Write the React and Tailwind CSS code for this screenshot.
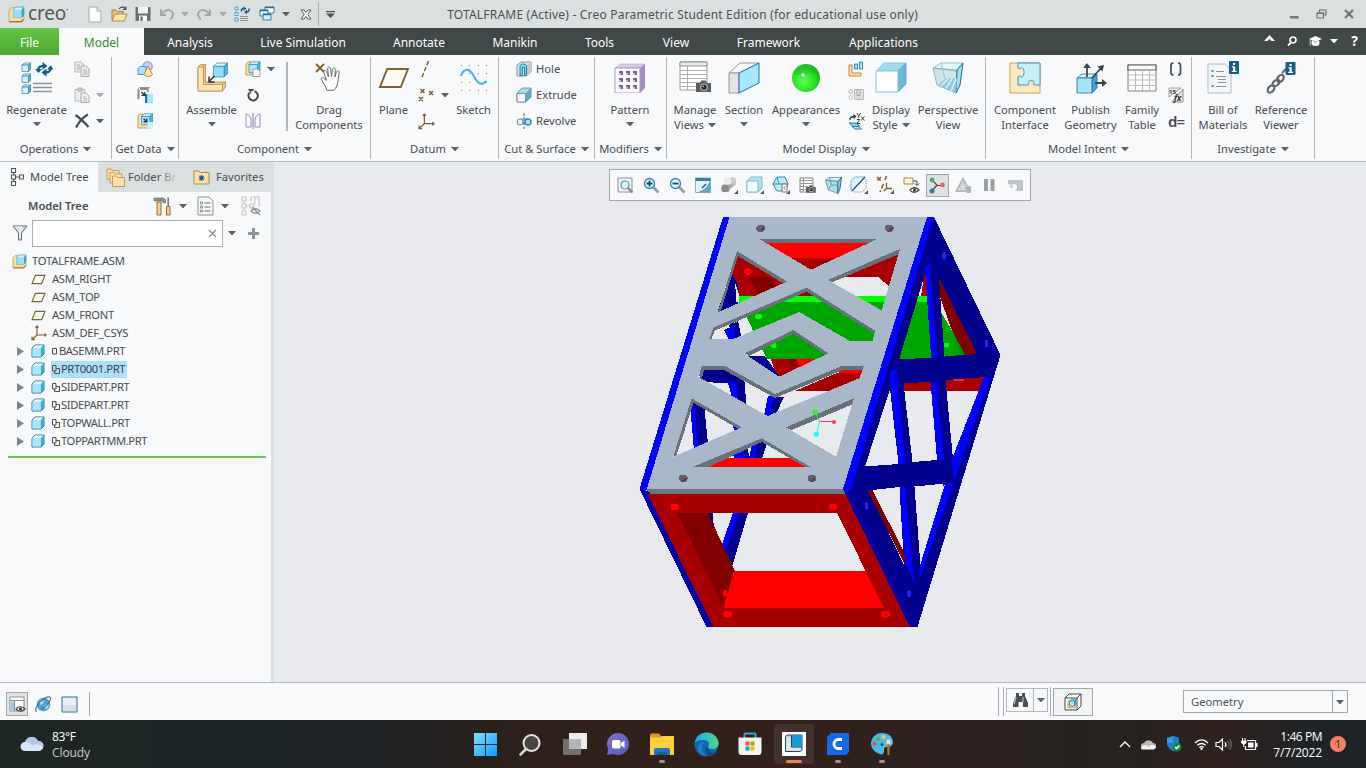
import React from "react";

/* ---------- small building blocks ---------- */

function Svg({ w = 16, h = 16, vb, children, className = "" }) {
  return (
    <svg width={w} height={h} viewBox={vb || `0 0 ${w} ${h}`} fill="none" className={`shrink-0 ${className}`}>
      {children}
    </svg>
  );
}

function Arrow({ color = "#5b6064", className = "" }) {
  return (
    <Svg w={8} h={4} className={className}>
      <path d="M0 0h8L4 4.500z" fill={color} />
    </Svg>
  );
}

function Slot({ w, children }) {
  return (
    <div className="flex h-full shrink-0 items-center justify-center" style={{ width: w }}>
      {children}
    </div>
  );
}

/* shaded box used by many icons */
function Cube({ x = 0, y = 0, s = 16, front = "#a9e8ff", top = "#e2f8ff", side = "#4fb8e0", line = "#2f80a4" }) {
  const d = s * 0.24;
  return (
    <g stroke={line} strokeWidth="0.7" strokeLinejoin="round">
      <path d={`M${x} ${y + d}L${x + d} ${y}H${x + s}L${x + s - d} ${y + d}z`} fill={top} />
      <path d={`M${x + s} ${y}V${y + s - d}L${x + s - d} ${y + s}V${y + d}z`} fill={side} />
      <path d={`M${x} ${y + d}H${x + s - d}V${y + s}H${x}z`} fill={front} />
    </g>
  );
}

/* ---------- shared icons ---------- */

const AsmIcon = ({ w = 16 }) => (
  <Svg w={w} h={w} vb="0 0 16 16">
    <path d="M1 4l2.500-2.500H6V10h9v2.500L12.500 15H1z" fill="#ffdf9f" stroke="#c39a55" strokeWidth=".8" />
    <path d="M1.500 14.600h11l2.200-2.200" stroke="#a87420" strokeWidth="1.200" />
    <path d="M5 3.500L7.500 1H15v7.500L12.500 11H5z" fill="#d9f5ff" stroke="#3d8fb3" strokeWidth=".7" />
    <path d="M12.500 3.500L15 1v7.500L12.500 11z" fill="#3f9fc8" />
    <path d="M5 3.500h7.500V11H5z" fill="#93dffa" />
  </Svg>
);

const PartIcon = () => (
  <Svg w={14} h={14}>
    <path d="M1 4l3-3h9v9l-3 3H1z" fill="#8fdcf7" stroke="#2a7799" />
    <path d="M1.500 4h8l3-2.500H4z" fill="#e6faff" />
    <path d="M10 4l2.500-2.500V10L10 12.500z" fill="#38a9d8" />
    <path d="M1.500 4.200h8v8.300h-8z" fill="#a8e6fc" />
  </Svg>
);

const PlaneIcon = ({ w = 16, h = 12, s = 1.3 }) => (
  <Svg w={w} h={h} vb="0 0 16 12">
    <path d="M4.600 1.500H15L11.400 10.500H1z" stroke="#7e612f" strokeWidth={s} fill="#fdfbf5" />
  </Svg>
);

const CsysIcon = ({ w = 16 }) => (
  <Svg w={w} h={w} vb="0 0 16 16">
    <path d="M6 1v9h9M6 10l-5 4.500M4.500 2.500L6 1l1.500 1.500M13.500 8.500L15 10l-1.500 1.500M1 11.700v3h3" stroke="#7e612f" strokeWidth="1.200" />
  </Svg>
);

const RegenSmall = () => (
  <Svg w={17} h={16}>
    <path d="M1 1h3v3H1zM1 6.500h3v3H1zM1 12h3v3H1z" stroke="#38a3cf" fill="#dff6ff" />
    <path d="M6 10.500h8M6 12.500h8M6 14.500h8" stroke="#8d9295" />
    <path d="M7.500 5.500C7 3.500 8 2.500 10 2.500M15 2.500c.5 2-.5 3.500-2.500 3.500" stroke="#155e80" strokeWidth="1.500" />
    <path d="M9.500 .2l3 2.300-3 2.300zM13 3.800l-3 2.300 3 2.100z" fill="#155e80" />
  </Svg>
);

/* ---------- title bar ---------- */

function TitleBar() {
  return (
    <div className="flex h-[28px] items-center bg-[#dae0df] text-[#4b4f52]">
      <div className="flex w-[83px] items-center pl-2">
        <AsmIcon w={17} />
        <span className="-mt-[2px] ml-[3px] text-[19px] leading-5 tracking-[-0.2px] text-[#54595b]">creo</span>
        <span className="mb-2 text-[6px] leading-none">•</span>
      </div>
      <Slot w={24}>
        <Svg w={14} h={17}>
          <path d="M1 1h8l4 4v11H1z" fill="#fff" stroke="#a3a8aa" />
          <path d="M9 1v4h4" stroke="#a3a8aa" fill="#eef0f1" />
        </Svg>
      </Slot>
      <Slot w={24}>
        <Svg w={17} h={16}>
          <path d="M1 14V4h4l1.500 1.500H12V8" fill="#e8c382" stroke="#a9834a" />
          <path d="M1 15L4 8h12l-2.500 7z" fill="#ffe3a9" stroke="#b28a4b" />
          <path d="M8 3c1-2 4-2.500 6-.5M14.800 .500v3h-3" stroke="#444" strokeWidth="1.200" />
        </Svg>
      </Slot>
      <Slot w={24}>
        <Svg>
          <path d="M0.500 1h15v14h-15z" fill="#6a6f72" />
          <path d="M3 1h10v6.500H3z" fill="#f4f5f5" />
          <path d="M4 9.500h8V15H4z" fill="#fff" />
          <path d="M5.500 10.500h2V15h-2z" fill="#5f6467" />
        </Svg>
      </Slot>
      <Slot w={24}>
        <Svg w={16} h={14}>
          <path d="M2 2.500v5.500h5M2.500 7.500C5 3.500 9 2 12 4s2.500 6-1 8.500" stroke="#a2a8a9" strokeWidth="2" />
        </Svg>
      </Slot>
      <Slot w={12}><Arrow color="#a2a8a9" /></Slot>
      <Slot w={26}>
        <Svg w={16} h={14}>
          <path d="M14 2.500V8H9M13.500 7.500C11 3.500 7 2 4 4S1.500 10 5 12.500" stroke="#a2a8a9" strokeWidth="2" />
        </Svg>
      </Slot>
      <Slot w={12}><Arrow color="#a2a8a9" /></Slot>
      <Slot w={26}><RegenSmall /></Slot>
      <Slot w={24}>
        <Svg>
          <path d="M6 1h9v6H6z" fill="#fff" stroke="#3b7ea2" />
          <path d="M1 4h8v6H1z" fill="#eaf8ff" stroke="#3b7ea2" />
          <path d="M4 8h8v6H4z" fill="#cdeffc" stroke="#3b7ea2" />
          <path d="M6 1.500h9M1 4.500h8M4 8.500h8" stroke="#2b6d90" strokeWidth="1.300" />
        </Svg>
      </Slot>
      <Slot w={14}><Arrow /></Slot>
      <Slot w={25}>
        <Svg w={12} h={11}>
          <path d="M1 1h3l2 2.500L8 1h3L7.800 5.500 11 10H8L6 7.500 4 10H1l3.200-4.500z" fill="#fff" stroke="#505558" />
        </Svg>
      </Slot>
      <div className="h-6 w-px bg-[#aab0b1]" />
      <Slot w={23}>
        <Svg w={9} h={7}>
          <path d="M0 0h9v1.200H0zM0 2.500h9L4.500 7z" fill="#4c5154" />
        </Svg>
      </Slot>
      <div className="flex-1" />
      <div className="mr-[371px] mt-px whitespace-nowrap text-[12px] leading-4 tracking-[0.2px]">
        TOTALFRAME (Active) - Creo Parametric Student Edition (for educational use only)
      </div>
      <div className="flex w-[77px] items-center justify-between pr-3">
        <Svg w={10} h={10}><path d="M1 7h8.500v2.500H1z" fill="#74797c" /></Svg>
        <Svg w={11} h={10}>
          <path d="M3.500 3V1H10v5H8" stroke="#6e7376" strokeWidth="1.200" />
          <path d="M1 4h6.500v5H1z" stroke="#6e7376" strokeWidth="1.200" />
          <path d="M1 4.300h6.500" stroke="#6e7376" strokeWidth="1.500" />
        </Svg>
        <Svg w={10} h={10}><path d="M1 1l8 8M9 1L1 9" stroke="#6e7376" strokeWidth="2.200" /></Svg>
      </div>
    </div>
  );
}

/* ---------- ribbon tabs ---------- */

const TABS = [
  ["Analysis", 92],
  ["Live Simulation", 134],
  ["Annotate", 98],
  ["Manikin", 94],
  ["Tools", 75],
  ["View", 78],
  ["Framework", 107],
  ["Applications", 123],
];

function TabBar() {
  return (
    <div className="flex h-[27px] bg-[#3f4747] text-[12px] leading-[29px] text-white">
      <div className="w-[59px] bg-gradient-to-b from-[#62c543] to-[#4fa934] text-center">File</div>
      <div className="w-[85px] bg-[#f7f9fb] text-center text-[#3f8a2c]">Model</div>
      {TABS.map(([label, w]) => (
        <div key={label} className="whitespace-nowrap text-center" style={{ width: w }}>{label}</div>
      ))}
      <div className="flex-1" />
      <div className="flex h-[25px] items-center pr-[8px]">
        <Svg w={11} h={6} className="-mt-[5px] mr-[12px]"><path d="M5.500 0L11 6H7.500L5.500 4 3.500 6H0z" fill="#fff" /></Svg>
        <Svg w={10} h={10} className="mr-[12px]">
          <circle cx="6" cy="4" r="3" stroke="#fff" strokeWidth="1.700" />
          <path d="M4 6.500L1 9.500" stroke="#fff" strokeWidth="2" />
        </Svg>
        <Svg w={13} h={10} className="mr-[8px]">
          <path d="M6.500 0L13 3 6.500 6 0 3z" fill="#fff" />
          <path d="M3 5v3.500c2 1.800 5 1.800 7 0V5L6.500 6.800zM1.200 3.500v6" fill="#fff" stroke="#fff" strokeWidth=".8" />
        </Svg>
        <Arrow color="#fff" className="mr-[13px]" />
        <span className="text-[14px] font-bold leading-none">?</span>
      </div>
    </div>
  );
}

/* ---------- ribbon ---------- */

function Group({ w, label, children }) {
  return (
    <div className="flex h-[106px] shrink-0 flex-col" style={{ width: w }}>
      <div className="flex h-full">
        <div className="flex min-w-0 flex-1 flex-col">
          <div className="flex h-[84px]">{children}</div>
          <div className="flex h-[19px] items-center justify-center gap-[5px] whitespace-nowrap text-[11.200px] leading-[19px]">
            {label}
            <Arrow />
          </div>
        </div>
        <div className="mt-[2px] h-[102px] w-px bg-[#b1b6ba]" />
      </div>
    </div>
  );
}

function Big({ w, icon, lines, drop, dropLast }) {
  return (
    <div className="flex shrink-0 flex-col items-center pt-[5px]" style={{ width: w }}>
      <div className="flex h-[35px] shrink-0 items-center justify-center">{icon}</div>
      <div className="mt-[7px] whitespace-nowrap text-[11.200px] leading-[15px]">{lines[0]}</div>
      {lines[1] && (
        <div className="flex items-center gap-[4px] whitespace-nowrap text-[11.200px] leading-[15px]">
          {lines[1]}
          {dropLast && <Arrow />}
        </div>
      )}
      {drop && <Arrow className="mt-[5px]" />}
    </div>
  );
}

function Stack({ w, rows, className = "" }) {
  return (
    <div className={`flex shrink-0 flex-col pt-px ${className}`} style={{ width: w }}>
      {rows.map((r, i) => (
        <div key={i} className="flex h-[26px] items-center">{r}</div>
      ))}
    </div>
  );
}

const RegenerateIcon = (
  <Svg w={32} h={32}>
    {[1, 12, 23].map((y) => <Cube key={y} x={1} y={y} s={8.500} front="#d3f2fc" />)}
    <path d="M12 25.500h19M12 29.500h19M12 21.500h19" stroke="#8e9396" strokeWidth="1.400" />
    <path d="M17.500 9.500C16.500 5.500 19 3.800 22.500 3.800M29.500 4.500c1.200 4-1.500 6-5 6" stroke="#155e80" strokeWidth="2.200" />
    <path d="M21.500 0l5 3.900-5 3.900zM25.500 6.500l-5 4 5 4z" fill="#155e80" />
    <path d="M14 7h7l-3.500 4zM26 7.500l3.500-4 3 4z" fill="#155e80" />
  </Svg>
);

const CopyIcon = (
  <Svg>
    <path d="M1 1h6l3 3v7H1z" fill="#ececed" stroke="#b3b6b8" />
    <path d="M7 5h5l3 3v7.500H7z" fill="#ececed" stroke="#a9acae" />
    <path d="M9 9h4M9 11h4.500M9 13h4.500M3 4h3M3 6h3M3 8h3" stroke="#a9acae" />
  </Svg>
);

const PasteIcon = (
  <Svg>
    <path d="M1 2.500h10V14H1z" fill="#ececed" stroke="#b3b6b8" />
    <path d="M4 1h4v3H4z" fill="#d0d2d3" stroke="#a9acae" />
    <path d="M7 6h5l3 3v6.500H7z" fill="#f2f2f3" stroke="#a9acae" />
    <path d="M9 10h3M9 12h4.500M9 14h4.500" stroke="#b5b8ba" />
  </Svg>
);

const DeleteIcon = (
  <Svg>
    <path d="M1.500 2C6 5 10 9 14.500 14M14 1.500C9 4 5 9 2 14.500" stroke="#454a4d" strokeWidth="2.200" />
  </Svg>
);

const ShapesIcon = (
  <Svg w={17} h={16}>
    <circle cx="10.500" cy="5.500" r="4.800" fill="#c5cff0" stroke="#7d8bba" />
    <path d="M1 7.500l2-2h6v7l-2 1H1z" fill="#a9e2f8" stroke="#4a97b8" />
    <path d="M11 5l4.500 8.500c-1 2.500-7.500 2.500-8.500 0z" fill="#ffe0a0" stroke="#b58a45" />
  </Svg>
);

const CopyGeomIcon = (
  <Svg w={17} h={16}>
    <path d="M3 1.500h8V5" stroke="#85898c" fill="#f4f4f4" />
    <path d="M0.500 2.500L2.500 .500h10L11 2.500v3M3 2.500h8" stroke="#85898c" strokeWidth=".9" />
    <path d="M0.500 2.500h2V12h-2z" fill="#85898c" />
    <path d="M8 7h8v9H8z" fill="#a5e8fd" />
    <path d="M8 7h2.200v9H8z" fill="#1c7196" />
    <path d="M4.500 5l3 3M7.800 5v3.300H4.500" stroke="#333" strokeWidth="1.300" />
  </Svg>
);

const ShrinkIcon = (
  <Svg w={17} h={16}>
    <path d="M1 3l2-2h3v9h7v5H1z" fill="#ffe0a0" stroke="#c39a55" />
    <Cube x={4.500} y={0.800} s={11} />
    <path d="M10.500 9h5.500v7h-5.500z" fill="#c5f1fe" />
    <path d="M6.500 5.500l3 3M9.800 5.500v3.300H6.500" stroke="#12415a" strokeWidth="1.400" />
  </Svg>
);

const AssembleIcon = (
  <Svg w={32} h={32}>
    <path d="M2 5l2.500-2.500h5V20H29.500v5l-3 4H2z" fill="#f2c987" stroke="#b58a45" strokeWidth=".8" />
    <path d="M2 5h5.500v17.500h19V29H2z" fill="#ffe6b8" stroke="#b58a45" strokeWidth=".8" />
    <path d="M7.500 5L10 2.500M26.500 22.500l3-2.500" stroke="#b58a45" strokeWidth=".8" />
    <Cube x={17.500} y={1} s={14} front="#8fdefa" />
    <path d="M18.500 14l-5 5M13 14.500V20h5.500" stroke="#333" strokeWidth="1.500" />
  </Svg>
);

const CreateIcon = (
  <Svg w={16} h={16}>
    <path d="M1 3l2-2h3v9h7v4H1z" fill="#ffe0a0" stroke="#c39a55" />
    <Cube x={4} y={0.800} s={11} />
    <path d="M8 8h4.500L15 10.500V15.500H8z" fill="#fff" stroke="#999da0" />
  </Svg>
);

const RepeatIcon = (
  <Svg w={16} h={14}>
    <path d="M9.500 3.200a4.700 4.700 0 1 1-5 1.500" stroke="#45494c" strokeWidth="2" />
    <path d="M3 1h5.500v2H6.200v3.500z" fill="#45494c" />
  </Svg>
);

const MirrorIcon = (
  <Svg w={17} h={16}>
    <path d="M1 1v13h5V7.500C6 4 4 1.500 1 1zM15 1v13h-5V7.500C10 4 12 1.500 15 1z" stroke="#9b88bf" fill="#fbfaff" />
    <path d="M8 0v16" stroke="#8573ab" />
  </Svg>
);

const DragIcon = (
  <Svg w={30} h={32}>
    <path d="M2 2l8 8M10 2l-8 8" stroke="#7e612f" strokeWidth="1.800" />
    <path
      d="M8.500 19c-2.500-2.500-1-4.500 1-3l3 2.500L10 11c-.8-3 2-3.500 2.800-1l1.700 5-.8-8c-.3-2.500 2.700-2.500 3 0l.8 7.500 1-7c.4-2.300 3-2 2.800.3l-.4 7.200 1.500-5c.7-2.200 3.100-1.500 2.700.8l-1.300 9c-.5 4-2 6.500-4 8.500h-7c-1-3.500-2-5.500-4.300-8.300z"
      fill="#fff" stroke="#6a6a6a"
    />
  </Svg>
);

const AxisIcon = (
  <Svg><path d="M10.500 0L4 16" stroke="#7e612f" strokeWidth="1.500" strokeDasharray="4.500 2" /></Svg>
);

const PointsIcon = (
  <Svg w={17} h={14}>
    <path d="M2.500 1l4 4M6.500 1l-4 4M11 3l4 4M15 3l-4 4M1 9l4 4M5 9l-4 4" stroke="#7e612f" strokeWidth="1.600" />
  </Svg>
);

const SketchIcon = (
  <Svg w={28} h={28}>
    {[1, 9, 18, 26].map((y) => [1, 9, 18, 26].map((x) => <rect key={`${x}-${y}`} x={x} y={y} width="1" height="1" fill="#777" />))}
    <path d="M1 12C3 5 9 3.500 12.500 10S20 24 26.500 17" stroke="#4cb5e2" strokeWidth="2.100" />
  </Svg>
);

const HoleIcon = (
  <Svg>
    <path d="M1 4l4-3h10v10l-5 4H1z" fill="#e6e8ea" stroke="#8b9093" />
    <path d="M10.500 4.500L15 1v10l-4.500 4z" fill="#c7cacc" />
    <path d="M4 14.500V4.500c1-2 5-2 6.500 0v10H8.500V6.500H6.300v8z" fill="#7fd6f5" stroke="#1d7ba3" />
  </Svg>
);

const ExtrudeIcon = (
  <Svg>
    <path d="M1 6l5-5h9v9l-5 5H1z" fill="#a9dcee" stroke="#5a9ab5" />
    <path d="M10 6l5-5v9l-5 5z" fill="#5aa9c7" />
    <path d="M1 6.500h8.500v8.500H1z" fill="#f3f4f5" stroke="#8b9093" />
  </Svg>
);

const RevolveIcon = (
  <Svg>
    <path d="M3 7c1-3.500 9-3.500 10 0l-5 5z" fill="#9fdaf0" />
    <circle cx="4" cy="9" r="3" fill="#edf0f2" stroke="#7b8790" />
    <circle cx="12" cy="9" r="3" fill="#a9e5fa" stroke="#2d89b0" strokeWidth="1.300" />
    <path d="M8 0v16" stroke="#555" strokeDasharray="3 1.500" />
  </Svg>
);

const PatternIcon = (
  <Svg w={32} h={30}>
    <path d="M1 5l5-4h25l-5 4z" fill="#d8cde9" stroke="#b3a6c8" strokeWidth=".6" />
    <path d="M26 5l5-4v24l-5 5z" fill="#a68cc6" />
    <path d="M1 5h25v25H1z" fill="#fbfafd" stroke="#a9a1b7" />
    {[9, 16, 23].map((y) => [5, 12, 19].map((x) => (
      <g key={`${x}-${y}`}><rect x={x} y={y - 1} width="4" height="4" fill="#7a60a1" /><rect x={x} y={y + 1} width="2" height="2" fill="#cabfdd" /></g>
    )))}
  </Svg>
);

const Camera = ({ x, y, s = 1 }) => (
  <g transform={`translate(${x} ${y}) scale(${s})`}>
    <path d="M0 3h4l1.500-2.500h4L11 3h4v9H0z" fill="#5a5d60" />
    <circle cx="8" cy="7.200" r="3.800" fill="#b9bcbe" />
    <circle cx="8" cy="7.200" r="2.600" fill="#26292b" />
    <circle cx="7.300" cy="6.500" r=".8" fill="#eee" />
  </g>
);

const ManageIcon = (
  <Svg w={33} h={33}>
    <path d="M1 1h27v28H1z" fill="#fff" stroke="#9b9fa2" />
    <path d="M1 1h27v4H1z" fill="#e8eaeb" stroke="#8b8f92" />
    <path d="M1 9.500h27M1 13.500h27M1 17.500h27M1 21.500h27M1 25.500h27M8.500 5v24" stroke="#abafb1" />
    <Camera x={17} y={19} />
  </Svg>
);

const SectionIcon = (
  <Svg w={32} h={32}>
    <path d="M1 11L12 1h19L11 11z" fill="#f7f8f9" stroke="#96999b" />
    <path d="M1 11h10v20H1z" fill="#e4e5e6" stroke="#96999b" />
    <path d="M11 11L31 1v20L11 31z" fill="#a5e8fd" stroke="#2b6f90" />
  </Svg>
);

const SphereIcon = (
  <Svg w={30} h={30}>
    <defs>
      <radialGradient id="sphere" cx=".42" cy=".62" r=".65">
        <stop offset="0" stopColor="#5cff4d" />
        <stop offset=".6" stopColor="#2ae128" />
        <stop offset="1" stopColor="#1fae22" />
      </radialGradient>
    </defs>
    <circle cx="15" cy="15" r="14" fill="url(#sphere)" />
    <path d="M3 14c3-4 20-5 25-1-1-6-6-11-13-11S4 7 3 14z" fill="#1db425" opacity=".35" />
    <circle cx="12" cy="12" r="1.800" fill="#eaffea" />
  </Svg>
);

const ExplodeIcon = (
  <Svg>
    <path d="M1 4h3v8h9v3H1z" fill="#ffe0a0" stroke="#b98a3d" />
    <path d="M6.500 3h3v5h-3zM11.500 1h3v7h-3z" fill="#a9e5fa" stroke="#2d89b0" />
  </Svg>
);

const StateIcon = (
  <Svg>
    <circle cx="2.800" cy="4.500" r="1.900" stroke="#aaa" /><circle cx="2.800" cy="10.500" r="1.900" stroke="#bbb" />
    <path d="M6.500 2.500h9v10h-9z" fill="#dddfe0" stroke="#b8bbbd" />
    <path d="M9 2.500v6h3V2.500" stroke="#a2a5a7" />
  </Svg>
);

const OrientIcon = (
  <Svg w={18} h={17}>
    <path d="M2 7c0-3 2-3.500 4.500-3.500" stroke="#333" strokeWidth="1.300" />
    <path d="M5.500 1L8.500 3.500l-3 2.500z" fill="#333" />
    <path d="M9 0l1.500 3M12.500 0L10 5M13 3.500l3.500 4M16.500 3.500l-3.500 4M8.800 6.500h3l-3 4h3.400" stroke="#444" />
    <path d="M1 10h7l4 3.500H5z" fill="#7fd3f2" stroke="#2482aa" />
    <path d="M4 13.500h7l2.500 2.500H7z" fill="#bdebfb" stroke="#2482aa" />
  </Svg>
);

const DisplayIcon = (
  <Svg w={32} h={31}>
    <path d="M1 9l8-8h22l-8 8z" fill="#9ddcf0" stroke="#7fc4dc" strokeWidth=".8" />
    <path d="M23 9l8-8v21l-8 8z" fill="#6cb9d6" stroke="#4f9fbf" strokeWidth=".8" />
    <path d="M1 9h22v21H1z" fill="#fff" stroke="#8fc4d8" />
  </Svg>
);

const PerspIcon = (
  <Svg w={32} h={32}>
    <path d="M1 6L9 1h22l-6 7z" fill="#e6f7fc" stroke="#8db4c4" strokeWidth=".8" />
    <path d="M1 6l24 3-1 22L5 23z" fill="#cfe4ec" stroke="#7ba6b8" strokeWidth=".8" />
    <path d="M25 8l6-7-3 22-4 8z" fill="#a9def0" stroke="#1b6b8e" />
    <path d="M9 1l4 16M13 17h13" stroke="#8fbccd" strokeWidth=".8" />
    <path d="M6 23l7-6h12l-1 14z" fill="#8fc7dc" />
    <path d="M9 24l7-7M14 26l6-9M19 29l5-12" stroke="#d9f0f8" strokeWidth="1.500" />
  </Svg>
);

const InterfaceIcon = (
  <Svg w={32} h={32}>
    <path d="M1 1h30v30H1z" fill="#ffe9c4" stroke="#c9a05a" />
    <path d="M9 1h22v22h-5c-2 0-2-1.500-1-2.500 1-2.500-6-2.500-5.500 0 1 1 .5 2.500-1.500 2.500H9v-8c.5-1.500 2-1 3 0 3.500 1 4.500-9 .5-9-1 0-2.500 1.500-3.500 0z" fill="#c8f0fb" stroke="#3d93b8" />
  </Svg>
);

const PublishIcon = (
  <Svg w={32} h={32}>
    <path d="M2 16l5-4h15l-5 4z" fill="#d9f6ff" stroke="#1c7196" strokeWidth=".8" />
    <path d="M17 16l5-4v14l-5 5z" fill="#45a5ce" stroke="#1c7196" strokeWidth=".8" />
    <path d="M2 16h15v15H2z" fill="#a2e5fc" stroke="#1c7196" strokeWidth=".8" />
    <path d="M12 15V4M17 16L27 5M20 21h9" stroke="#3e4346" strokeWidth="1.800" />
    <path d="M12 1l3.800 5H8.200zM29 3l-1.500 6.500-5-5zM32 21l-5 4v-8z" fill="#3e4346" />
  </Svg>
);

const TableIcon = (
  <Svg w={30} h={28}>
    <path d="M1 1h28v26H1z" fill="#fff" stroke="#7e8386" />
    <path d="M1 1h28v5H1z" fill="#f6f7f7" stroke="#5c6164" strokeWidth="1.200" />
    <path d="M1 11h28M1 16h28M1 21.500h28M8.500 6v21M15.500 6v21M22.500 6v21" stroke="#b9bdbf" />
  </Svg>
);

const FxIcon = (
  <Svg w={17} h={17}>
    <path d="M1 1h12L1 10z" fill="#f1f1f1" stroke="#a0a3a5" />
    <path d="M15 2v13H4z" fill="#e3e5e6" stroke="#8e9294" />
    <text x="1" y="7" fontSize="6" fontWeight="700" fill="#333" fontFamily="Noto Sans, sans-serif">15</text>
    <text x="6" y="14" fontSize="8" fontStyle="italic" fontWeight="700" fill="#333" fontFamily="Noto Sans, sans-serif">fx</text>
  </Svg>
);

const InfoBadge = ({ x, y }) => (
  <g>
    <rect x={x} y={y} width="10" height="13" rx="1" fill="#155e80" />
    <path d={`M${x + 4} ${y + 2}h2.200v2h-2.200zM${x + 3} ${y + 5.200}h3.200v4.500h1.300v1.300H${x + 2.800}V${y + 9.700}h1.300V${y + 6.500}H${x + 3}z`} fill="#fff" />
  </g>
);

const BomIcon = (
  <Svg w={32} h={33}>
    <path d="M1 3h17l6 6v23H1z" fill="#f5f6f7" stroke="#b5b9bb" />
    <path d="M4.500 9h2v2h-2zM4.500 14h2v2h-2zM4.500 24h2v2h-2z" fill="#2f94bf" />
    <path d="M9 10.500h8M9 15.500h10M11 18.500h8M11 21.500h8M9 25.500h10" stroke="#8e9396" />
    <InfoBadge x={22} y={0} />
  </Svg>
);

const RefIcon = (
  <Svg w={30} h={32}>
    <g stroke="#63686b" strokeWidth="2.200">
      <ellipse cx="5" cy="27" rx="4" ry="2.800" transform="rotate(-50 5 27)" />
      <ellipse cx="10" cy="21" rx="4" ry="2.600" transform="rotate(-40 10 21)" />
      <ellipse cx="14.500" cy="16.500" rx="4" ry="2.800" transform="rotate(-50 14.500 16.500)" />
      <path d="M16 11l4-4" />
    </g>
    <InfoBadge x={19.500} y={0} />
  </Svg>
);

function Ribbon() {
  return (
    <div className="flex h-[107px] border-b border-[#b4bbc1] bg-[#f7f9fb] text-[#464b4f]">
      <Group w={112} label="Operations">
        <Big w={73} icon={RegenerateIcon} lines={["Regenerate"]} drop />
        <Stack w={38} className="pl-px" rows={[
          CopyIcon,
          <>{PasteIcon}<Arrow color="#a7abad" className="ml-[6px]" /></>,
          <>{DeleteIcon}<Arrow className="ml-[6px]" /></>,
        ]} />
      </Group>
      <Group w={67} label="Get Data">
        <Stack w={66} className="items-center" rows={[ShapesIcon, CopyGeomIcon, ShrinkIcon]} />
      </Group>
      <Group w={192} label="Component">
        <Big w={65} icon={AssembleIcon} lines={["Assemble"]} drop />
        <Stack w={42} className="pl-px" rows={[
          <>{CreateIcon}<Arrow className="ml-[6px]" /></>,
          RepeatIcon,
          MirrorIcon,
        ]} />
        <div className="mt-[7px] h-[69px] w-[2px] bg-[#b1b6ba]" />
        <Big w={82} icon={DragIcon} lines={["Drag", "Components"]} />
      </Group>
      <Group w={128} label="Datum">
        <Big w={45} icon={<PlaneIcon w={32} h={24} s={0.95} />} lines={["Plane"]} />
        <Stack w={34} className="pl-[2px]" rows={[
          AxisIcon,
          <>{PointsIcon}<Arrow className="ml-[6px]" /></>,
          <CsysIcon key="c" w={17} />,
        ]} />
        <Big w={47} icon={SketchIcon} lines={["Sketch"]} />
      </Group>
      <Group w={96} label="Cut & Surface">
        <Stack w={95} className="pl-[17px] text-[11.200px]" rows={[
          <><div className="mr-1">{HoleIcon}</div>Hole</>,
          <><div className="mr-1">{ExtrudeIcon}</div>Extrude</>,
          <><div className="mr-1">{RevolveIcon}</div>Revolve</>,
        ]} />
      </Group>
      <Group w={72} label="Modifiers">
        <Big w={70} icon={PatternIcon} lines={["Pattern"]} drop />
      </Group>
      <Group w={319} label="Model Display">
        <Big w={56} icon={ManageIcon} lines={["Manage", "Views"]} dropLast />
        <Big w={42} icon={SectionIcon} lines={["Section"]} drop />
        <Big w={82} icon={SphereIcon} lines={["Appearances"]} drop />
        <Stack w={19} className="pl-px" rows={[ExplodeIcon, StateIcon, OrientIcon]} />
        <Big w={50} icon={DisplayIcon} lines={["Display", "Style"]} dropLast />
        <Big w={64} icon={PerspIcon} lines={["Perspective", "View"]} />
      </Group>
      <Group w={206} label="Model Intent">
        <Big w={78} icon={InterfaceIcon} lines={["Component", "Interface"]} />
        <Big w={53} icon={PublishIcon} lines={["Publish", "Geometry"]} />
        <Big w={50} icon={TableIcon} lines={["Family", "Table"]} />
        <Stack w={20} className="pl-px" rows={[
          <Svg key="b" w={16} h={14}><path d="M5.500 1C3.500 1 3 1.500 3 3.500v7C3 12.500 3.500 13 5.500 13M10 1c2 0 2.500.5 2.500 2.500v7c0 2-.5 2.500-2.500 2.500" stroke="#45494c" strokeWidth="1.700" /></Svg>,
          FxIcon,
          <span key="d" className="text-[15px] font-semibold leading-none tracking-[-0.8px]">d=</span>,
        ]} />
      </Group>
      <Group w={123} label="Investigate">
        <Big w={62} icon={BomIcon} lines={["Bill of", "Materials"]} />
        <Big w={54} icon={RefIcon} lines={["Reference", "Viewer"]} />
      </Group>
    </div>
  );
}

/* ---------- model tree panel ---------- */

const TreeTabIcon = (
  <Svg w={14} h={20}>
    <path d="M1.500 1.500h4v4h-4zM1.500 8h4v4h-4zM1.500 14.500h4v4h-4zM9.500 8h4v4h-4zM3.500 5.500V8M3.500 12v2.500M5.500 10h4" stroke="#505558" strokeWidth="1.100" />
  </Svg>
);

const FolderShape = ({ x, y, w = 12, h = 9 }) => (
  <path d={`M${x} ${y}h4l1 1.500h${w - 5}v${h}H${x}z`} fill="#ffe0a6" stroke="#c49a5a" />
);

function SidePanel() {
  const datums = ["ASM_RIGHT", "ASM_TOP", "ASM_FRONT"];
  const parts = ["BASEMM.PRT", "PRT0001.PRT", "SIDEPART.PRT", "SIDEPART.PRT", "TOPWALL.PRT", "TOPPARTMM.PRT"];
  return (
    <div className="flex w-[274px] shrink-0 flex-col bg-[#dadfe3] text-[11.200px] text-[#484d50]">
      <div className="flex h-[30px] bg-[#dae0df]">
        <div className="flex w-[98px] items-center gap-[6px] whitespace-nowrap bg-[#f7f9fb] pl-[10px]">
          {TreeTabIcon}Model Tree
        </div>
        <div className="flex w-[89px] items-center whitespace-nowrap pl-[8px]">
          <Svg w={19} h={19}>
            <FolderShape x={1} y={1} /><FolderShape x={4} y={4.500} /><FolderShape x={6.500} y={8} />
          </Svg>
          <span className="ml-[3px]">Folder <span className="bg-gradient-to-r from-[#6a6f72] to-[#d0d5d5] bg-clip-text text-transparent">Br</span></span>
        </div>
        <div className="flex items-center whitespace-nowrap pl-[6px]">
          <Svg w={17} h={16}>
            <path d="M1 2h5l1 1.500h9V15H1z" fill="#ffe0a6" stroke="#b1894d" />
            <path d="M8.500 6v6M5.500 9h6M6.400 6.900l4.200 4.200M10.600 6.900l-4.200 4.200" stroke="#155e80" strokeWidth="1.200" />
          </Svg>
          <span className="ml-[6px]">Favorites</span>
        </div>
      </div>
      <div className="mr-[3px] flex flex-1 flex-col bg-[#f7f9fb]">
        <div className="flex h-[28px] items-center pl-[28px]">
          <div className="w-[125px] font-semibold">Model Tree</div>
          <Svg w={19} h={20}>
            <path d="M1 2h9l2.500 1.500V7h-2L9 5H1z" fill="#8a8f92" stroke="#666" strokeWidth=".6" />
            <path d="M4 6h4v13H4zM13.500 10.500h3.500V19h-3.500z" fill="#f3cf94" stroke="#9a6e33" />
            <path d="M15.200 1.500v9" stroke="#777c80" strokeWidth="1.600" />
          </Svg>
          <Arrow className="ml-[7px] mr-[10px]" />
          <Svg w={17} h={20}>
            <path d="M1 1h11l4 4v14H1z" fill="#f5f6f7" stroke="#8d9194" />
            <path d="M7.500 7h6M7.500 11h6M7.500 15h6" stroke="#6a6f72" />
            <path d="M3.500 6h2v2h-2zM3.500 10h2v2h-2zM3.500 14h2v2h-2z" stroke="#6a6f72" strokeWidth=".7" />
          </Svg>
          <Arrow className="ml-[7px] mr-[12px]" />
          <Svg w={20} h={20}>
            <path d="M1 1h4v4H1zM1 8h4v4H1zM1 15h4v4H1zM9 8h4v4H9zM3 5v3M3 12v3M5 10h4M10 1h8v10M14 1v7M10 1v4" stroke="#c3c6c8" strokeWidth="1.200" />
            <path d="M10 15c2.500-3 6-3 9 0-3 3-6.500 3-9 0zM11 11l8 8" stroke="#8e9295" strokeWidth="1.300" />
          </Svg>
        </div>
        <div className="flex h-[26px] items-center pl-[12px]">
          <Svg w={16} h={16}>
            <path d="M1 1h14L9.500 8v7h-3V8z" fill="#d9dbdd" stroke="#666b6e" />
            <path d="M3 2h7l-2 5v6" stroke="#fff" />
          </Svg>
          <div className="ml-[4px] flex h-[27px] w-[191px] items-center justify-end border border-[#a9aeb2] bg-white pr-[5px]">
            <Svg w={9} h={9}><path d="M1 1l7 7M8 1L1 8" stroke="#85898c" strokeWidth="1.200" /></Svg>
          </div>
          <Arrow className="ml-[5px] mr-[12px]" />
          <Svg w={11} h={11}><path d="M5.500 0v11M0 5.500h11" stroke="#8f9497" strokeWidth="3" /></Svg>
        </div>
        <div className="mt-[6px] flex h-[18px] items-center pl-[12px]">
          <AsmIcon w={15} />
          <span className="ml-[5px] tracking-[-0.2px]">TOTALFRAME.ASM</span>
        </div>
        {datums.map((d) => (
          <div key={d} className="flex h-[18px] items-center pl-[31px]">
            <PlaneIcon w={15} h={11} />
            <span className="ml-[6px] tracking-[-0.3px]">{d}</span>
          </div>
        ))}
        <div className="flex h-[18px] items-center pl-[31px]">
          <CsysIcon w={16} />
          <span className="ml-[5px] tracking-[-0.25px]">ASM_DEF_CSYS</span>
        </div>
        {parts.map((p, i) => (
          <div key={i} className="flex h-[18px] items-center pl-[17px]">
            <Svg w={7} h={9}><path d="M0 0l7 4.500L0 9z" fill="#808487" /></Svg>
            <div className="ml-[7px] mr-[6px]"><PartIcon /></div>
            <div className={`flex h-[17px] items-center pl-px pr-[2px] tracking-[-0.4px] ${i === 1 ? "bg-[#addff9] text-[#33434d]" : ""}`}>
              {i === 0 ? (
                <Svg w={7} h={9}><path d="M.5 1.500h4v5.500h-4z" stroke="#4b4f52" /></Svg>
              ) : (
                <Svg w={9} h={9}><path d="M.5.500h3.500v5.500h-3.500zM4 3.500h3.500v5H2.500V6" stroke="#4b4f52" /></Svg>
              )}
              {p}
            </div>
          </div>
        ))}
        <div className="ml-[8px] mt-[6px] h-[2px] w-[258px] bg-[#6cc24f]" />
      </div>
    </div>
  );
}

/* ---------- graphics window ---------- */

const Lens = ({ sign }) => (
  <Svg w={17} h={17}>
    <path d="M10 10l5.500 5.500" stroke="#9a9da0" strokeWidth="2.800" />
    <circle cx="6.500" cy="6.500" r="5" fill="#e2f6fd" stroke="#3186ab" strokeWidth="1.300" />
    <path d={sign === "+" ? "M3.500 6.500h6M6.500 3.500v6" : "M3.500 6.500h6"} stroke="#124c6c" strokeWidth="1.800" />
  </Svg>
);

const Corner = () => <path d="M18 14v4h-4z" fill="#555" />;

const VIEW_TOOLS = [
  <Svg w={17} h={17}>
    <path d="M1 1h14v14H1z" fill="#f3f4f5" stroke="#8d9194" />
    <path d="M10.500 10.500l5 5" stroke="#888" strokeWidth="2.400" />
    <circle cx="8" cy="8" r="4" fill="#def5fd" stroke="#5594b0" strokeWidth="1.200" />
  </Svg>,
  <Lens sign="+" />,
  <Lens sign="-" />,
  <Svg>
    <path d="M.5 1h15v14.500H.5z" fill="#e3f4fb" stroke="#8ab4c6" />
    <path d="M.5 1h15v3H.5z" fill="#3a83a5" />
    <path d="M15 4v11.500H2c6-2 10-5 13-11.500z" fill="#5fa4c0" />
    <path d="M7 11l4-4" stroke="#444" strokeWidth="1.300" />
  </Svg>,
  <Svg w={18} h={18}>
    <path d="M2 9l6-1 7-6 1 6-6 5-1 3H2z" fill="#a8aaac" />
    <circle cx="12.500" cy="5" r="3.800" fill="#c9cbcc" />
    <circle cx="5" cy="12.500" r="3.800" fill="#898c8e" />
    <circle cx="7.500" cy="5" r="3.800" fill="#eceded" />
    <Corner />
  </Svg>,
  <Svg w={18} h={18}>
    <path d="M1 5l4-4h11v11l-4 4H1z" fill="#b5e2f1" stroke="#7fb8ce" />
    <path d="M1 5h11v11H1z" fill="#f7fdff" stroke="#7fb8ce" />
    <Corner />
  </Svg>,
  <Svg w={18} h={18}>
    <path d="M1 8l4-7h8l3 7-3 7H5z" fill="#bfe9f7" stroke="#3d87a8" />
    <path d="M1 8h15M5 1l2 7" stroke="#3d87a8" />
    <path d="M10 8h5v8h-5z" fill="#fff" stroke="#777" />
    <path d="M11.500 11h2M11.500 13h2" stroke="#777" />
    <Corner />
  </Svg>,
  <Svg w={17} h={17}>
    <path d="M1 1h13v14H1z" fill="#fff" stroke="#888" />
    <path d="M1 3.500h13M1 6.500h13M1 9.500h8M1 12.500h6M4.500 1v14" stroke="#999" />
    <Camera x={7} y={8} s={0.65} />
  </Svg>,
  <Svg w={17} h={17} vb="0 0 32 32">
    <path d="M1 6L9 1h22l-5 7z" fill="#e0f4fb" stroke="#5d9ab2" strokeWidth="1.600" />
    <path d="M1 6l23 3v22L6 24z" fill="#b4dbe9" stroke="#5d9ab2" strokeWidth="1.600" />
    <path d="M24 9l7-8-3 22-4 8z" fill="#8fd0e8" stroke="#1b6b8e" strokeWidth="1.800" />
    <path d="M9 2l3 13h13M6 23l6-8" stroke="#5697b3" strokeWidth="1.600" />
  </Svg>,
  <Svg w={18} h={18}>
    <path d="M1 5l4-4h10L2 15H1z" fill="#dff5fc" stroke="#7fb8ce" />
    <path d="M16 3v9l-4 4H4" stroke="#888" strokeDasharray="1 1" />
    <path d="M15 1L2 15" stroke="#1b5f80" strokeWidth="1.300" />
    <Corner />
  </Svg>,
  <Svg w={18} h={18}>
    <path d="M1 1l4 4M5 1L1 5M10.500 0L9 4M7.500 8L4 16" stroke="#7e612f" strokeWidth="1.600" strokeDasharray="5 2" />
    <path d="M10.500 7v5.500H16M10.500 12.500L7.500 15" stroke="#7e612f" strokeWidth="1.300" />
    <Corner />
  </Svg>,
  <Svg w={17} h={17}>
    <path d="M1 1h9v6H1z" fill="#fff4cd" stroke="#9a8a5a" />
    <path d="M10 4h4v4M12 6.500l2 2 2-2" stroke="#444" />
    <path d="M7 13c2-3 6-3 9 0-3 3-7 3-9 0z" stroke="#444" strokeWidth="1.300" fill="#fff" />
    <circle cx="11.500" cy="13" r="1.500" fill="#333" />
  </Svg>,
  <Svg w={17} h={17}>
    <path d="M3 3l5 5-5 6M8 8.500h5" stroke="#444" strokeWidth="1.200" />
    <circle cx="3" cy="3" r="2.400" fill="#5aa864" /><circle cx="3" cy="14" r="2.500" fill="#367da2" /><circle cx="13.500" cy="8" r="2.400" fill="#dd6c6c" />
  </Svg>,
  <Svg w={17} h={17}>
    <path d="M8 2l6.500 12h-13z" stroke="#b5b8ba" strokeWidth="2" />
    <path d="M8 6l3 6H5z" fill="#e3e5e6" stroke="#bbb" />
    <path d="M11 9h5v7h-5z" fill="#b3b6b8" />
  </Svg>,
  <Svg w={12} h={12}><path d="M1 0h4v12H1zM7.500 0h4v12h-4z" fill="#9c9fa1" /></Svg>,
  <Svg w={17} h={13}>
    <path d="M1 1h15v11H7c4-1 4-7 0-7H1z" fill="#c2c5c7" />
    <path d="M2 5h4v4H3z" fill="#d2d4d5" />
  </Svg>,
];

/* outline of the top plate and its openings */
const PLATE =
  "M729 217H928L844 489H646z" +
  "M759.500 239L811 269.700 877.500 239z" +
  "M737 251L717.500 312.500 787 281.500z" +
  "M900 249L827.700 280 881.700 310.300z" +
  "M713.300 327.700L806.700 287.700 875 330.700 872.700 341H850L799.300 312 733 339H709.300z" +
  "M793.500 330L828.500 353.300 779 376.700 744.300 353.500z" +
  "M701.700 366H725L775 394 841.700 366H864L859.300 378.300 767.300 416 698.300 376.700z" +
  "M691.700 398.300L741.700 427.300 673.300 456.700z" +
  "M854 398.300L836 456.700 785.700 427.300z" +
  "M761.700 438.300L810 466.700H693.300z";

/* side wall with its openings */
const WALL =
  "M930 217L934 217 1000.500 355 917.500 627H910L843 489z" +
  "M927.500 266L899 359.500 931.800 357.500 929 305z" +
  "M939 278L944.500 356.500 977 354z" +
  "M890 389L865 466.500 898.500 464z" +
  "M903.500 383.500L912.500 462 937 460 931.500 381.500z" +
  "M945.500 380L985.500 377 953 459z" +
  "M868.500 490.500L899.500 487 904 565z" +
  "M914.500 486.500L945.500 483.500 920.500 566z";

function Model() {
  const G = "#66717b";
  const BG = "#e8eaee";
  return (
    <svg width="1092" height="520" viewBox="274 162 1092 520" shapeRendering="crispEdges" className="block">
      {/* rear frame and shelf seen through the openings */}
      <path d="M731 250H905V297H731z" fill="#a80000" />
      <path d="M760 239h118v19H760z" fill="#ff0000" />
      <path d="M749 277h21l7 9-19 8z" fill="#800000" />
      <path d="M815 277h63l12 10v18l-8 10h-72z" fill={BG} />
      <path d="M738 296h196v6H738z" fill="#00ff00" />
      <path d="M739 302h196l34 57H767z" fill="#00a600" />
      <path d="M800 296l9-5 9 5z" fill="#a80000" />
      <path d="M926 262h9l-3 34h-11z" fill="#a80000" />
      <path d="M943 302l6 10 20 46h-7z" fill="#008f00" />
      <path d="M933 262h8l50 97h-24l-16-31-12-34z" fill="#800000" />
      <path d="M771 359h59l-20 12-28 8z" fill="#ff0000" />
      <path d="M771 359h25l4 8-22 13z" fill="#a80000" />
      <path d="M787 359h9l-2 9z" fill="#800000" />
      <path d="M840 370h25v2.500h-26z" fill="#ff0000" />
      <path d="M838 372.500h27l-5 6-31 12.500h-34z" fill="#a80000" />
      <path d="M885 358h104v32.500H885z" fill="#a80000" />
      <path d="M901 357h70l-5 2h-66z" fill="#00a600" />
      <path d="M945 356l22-1 10 4h-32z" fill="#800000" />
      <path d="M954 378h10v2.500h-10z" fill="#ff2020" />
      <path d="M706 458h105v9H692z" fill="#ff0000" />

      {/* far side wall */}
      <path d="M731 272l7 13v23l-22 8z" fill="#00008c" />
      <path d="M735 283l3.500 10v9h-2z" fill={BG} />
      <path d="M736 322l2-2 4 20h-9l-4-15z" fill="#00008c" />
      <path d="M724 330l9-4 3 14h-7z" fill="#0000ff" />
      <path d="M747 356h18l16 23-14-5z" fill="#00008c" />
      <path d="M703 368h20l22 14 1 24-13-6-5-17-30-1z" fill="#00008c" />
      <path d="M728 382l7-2 4 22-7-4z" fill="#0000ff" />
      <path d="M772 397h12l-7 15-10 5z" fill="#00008c" />
      <path d="M768 396h6l-5 20-5-1z" fill="#0000ff" />
      <path d="M692 402l12 2 4 40-13 6z" fill="#00008c" />
      <path d="M690 405l4-1 5 44-5 2z" fill="#0000ff" />
      <path d="M732 424l11 3-8 4z" fill="#0000ff" />
      <path d="M733 454l13-5 3 9h-15z" fill="#0000ff" />
      <path d="M744 450l4-3 1 11h-4z" fill="#00008c" />
      <path d="M754 445l15-7-7 20h-11z" fill="#00008c" />
      <path d="M752 445l6-2-4 15h-5z" fill="#0000ff" />

      <ellipse cx="748" cy="271.700" rx="4" ry="3.300" fill="#ff0000" />
      <ellipse cx="758.500" cy="316.500" rx="3.300" ry="2.800" fill="#00ff00" />
      <ellipse cx="773.500" cy="345.500" rx="3" ry="2.500" fill="#00ff00" />
      <ellipse cx="946.500" cy="345" rx="3" ry="2.500" fill="#00ff00" />

      {/* plate thickness inside the openings */}
      <g fill={G}>
        <path d="M759 239h119l-8 4H767z" />
        <path d="M737 251l50 30.500-4 1.800-45-27.300-17.500 56-3 1.200z" />
        <path d="M900 249l-72.300 31 4.500 2.300 66.300-28z" />
        <path d="M713.300 327.700L806.700 287.700l68.300 43-1 3-67.300-42-92 39-3.200 8.300h-2.200z" />
        <path d="M793.500 330l35 23.300-3.500 1.500-31.500-21-44.500 22-4.700-2.500z" />
        <path d="M701.700 366H725l50 28 66.700-28H864l-1.500 4H843l-68 28-51-28h-20l-2 8-3-2z" />
        <path d="M691.700 398.300l50 29-3.500 1.500-44.700-26-17 52.500-3.200 1.200z" />
        <path d="M854 398.300l-68.300 29 5.500 3 61.300-26z" />
        <path d="M761.700 438.300l48.300 28.400h-5l-43.300-24.700-52 24.700h-16.500z" />
      </g>

      {/* top plate */}
      <path d={PLATE} fill="#a9b8c8" fillRule="evenodd" />
      <path d="M646 489h198l2 5H648z" fill="#6d777f" />
      {[[760.700, 228.300], [889.300, 228.300], [683.300, 478.300], [812, 478.300]].map(([x, y]) => (
        <g key={`${x}-${y}`}>
          <ellipse cx={x} cy={y} rx="4.400" ry="3.600" fill="#59636c" />
          <path d={`M${x - 1} ${y + 3.500}l4-2 .8-2.300-2.500 1z`} fill="#a01818" />
        </g>
      ))}
      <path d="M723 217h6.500L646.500 490l-2 2-5-3z" fill="#0000ff" />
      <path d="M639.500 489l10 3 66 135h-9z" fill="#0000a8" />

      {/* front frame */}
      <path d="M704 513h9l1 20z" fill="#00008c" />
      <path d="M733 513h7l-14 42-4-11z" fill="#0000ff" />
      <path d="M739 513h9l-16 54-7-14z" fill="#00008c" />
      <path d="M674 511h33l28 60-12 38z" fill="#800000" />
      <path d="M734 571h132l20 38H723z" fill="#ff0000" />
      <path d="M647.500 494H847l66 133H713.500zM677 513l47 95h160l-47-95z" fill="#a80000" fillRule="evenodd" />
      <g fill="#ff0000">
        <ellipse cx="674.800" cy="507" rx="4.400" ry="3.500" />
        <ellipse cx="833" cy="507" rx="4.400" ry="3.500" />
        <ellipse cx="727.800" cy="614" rx="4.400" ry="3.500" />
        <ellipse cx="885.500" cy="614" rx="4.400" ry="3.500" />
        <ellipse cx="725" cy="593.500" rx="1.800" ry="3.500" />
      </g>

      {/* near side wall */}
      <path d={WALL} fill="#00008c" fillRule="evenodd" />
      <path d="M867 489.500h5l33.500 65v12z" fill="#800000" />
      <path d="M843 489h5l67 138h-4.500z" fill="#0000a6" />
      <g fill="#0000ff">
        <path d="M927 217h6.500L851.500 489l-4.500 3-4-3z" />
        <path d="M925 268l5-6 7 94.500h-6z" />
        <path d="M889.500 372l7-3 9 94.500h-7z" />
        <path d="M930.500 381.500h6l7.500 78h-7z" />
        <path d="M984 377l7-.5-33.500 111-22 77-14.500 25-1-24 25-81.500 7-25z" />
        <path d="M899.500 487h6l8.500 95-9-19z" />
      </g>
      <path d="M952 459l2 23-11 4-6-26z" fill="#00008c" />
      <path d="M921 566l-3 21-4-5z" fill="#00008c" />
      <path d="M991 376l9.500-21-83 272-1-39z" fill="#00008c" />
      <g fill="#2525f0">
        <ellipse cx="944" cy="256" rx="1.800" ry="3.800" />
        <ellipse cx="986.500" cy="343.500" rx="1.800" ry="3.500" />
        <ellipse cx="866.500" cy="506" rx="1.800" ry="3.800" />
        <ellipse cx="909" cy="593.500" rx="1.800" ry="3.500" />
      </g>

      {/* spin centre */}
      <g shapeRendering="auto">
        <path d="M819.500 421.500H832" stroke="#ee4444" />
        <circle cx="834" cy="422" r="2" fill="#ee4444" />
        <path d="M819.500 421.500l-4-8" stroke="#44e844" />
        <circle cx="815.300" cy="412.300" r="3" fill="#35ee35" />
        <path d="M819.500 421.500l-2.500 11" stroke="#30f0f5" />
        <circle cx="816.300" cy="434.300" r="2.700" fill="#30f4fa" />
      </g>
    </svg>
  );
}

function GraphicsWindow() {
  return (
    <div className="relative min-w-0 flex-1 bg-[#e8eaee]">
      <Model />
      <div className="absolute left-[335px] top-[7px] flex h-[32px] w-[422px] items-center border border-[#a3a7aa] bg-[#f7f9fb] pl-[2px]">
        {VIEW_TOOLS.map((icon, i) => (
          <div key={i} className="flex h-6 w-[26px] shrink-0 items-center justify-center">
            {i === 12 ? (
              <div className="flex h-[23px] w-[23px] items-center justify-center border border-[#a3a7aa] bg-[#dfe1e3]">{icon}</div>
            ) : icon}
          </div>
        ))}
      </div>
    </div>
  );
}

/* ---------- status bar ---------- */

function StatusBar() {
  return (
    <div className="flex h-[38px] border-t border-[#b0b6bb] bg-[#f7f9fb] text-[#4b5053]">
      <div className="flex items-center pl-[6px] pt-[5px]">
        <div className="flex h-[24px] w-[22px] items-center justify-center border border-[#a3a7aa] bg-[#dfe1e3]">
          <Svg w={17} h={17}>
            <path d="M1 1h14v14H1z" fill="#fff" stroke="#8d9194" />
            <path d="M1 4.500h14M5.500 4.500V15" stroke="#8d9194" strokeWidth="1.200" />
            <path d="M2 5.500h3V14H2z" fill="#8fcde3" />
            <path d="M7 13c2.500-3 6-3 9 0-3 3-6.500 3-9 0z" fill="#fff" stroke="#444" strokeWidth="1.200" />
            <circle cx="11.500" cy="13" r="1.500" fill="#333" />
          </Svg>
        </div>
        <Svg w={17} h={17} className="ml-[7px]">
          <circle cx="8.500" cy="8.500" r="6.800" fill="#4ba6cf" />
          <path d="M5 3.500l3 .500 1 3-3 2-2-2zM10 8l4 1-2 4-3-1z" fill="#a9dcf2" />
          <path d="M1.500 15.500C-1 13 4 5.500 9 2.500s8-1.500 6 2-5 7-9 9" stroke="#59636a" strokeWidth="1.100" />
        </Svg>
        <Svg w={17} h={17} className="ml-[9px]">
          <path d="M1 1h15v15H1z" fill="#e9f0f3" stroke="#2c6e8f" />
          <path d="M2 9h13v6H2z" fill="#d5e1e7" />
        </Svg>
        <div className="ml-[11px] h-6 w-px bg-[#a3a7aa]" />
      </div>
      <div className="flex-1" />
      <div className="flex items-start pt-[4px]">
        <div className="h-[29px] w-px bg-[#a9adb0]" />
        <div className="ml-1 h-[29px] w-px bg-[#a9adb0]" />
        <div className="ml-[2px] mt-px flex h-[24px] w-[42px] border border-[#b5b9bc]">
          <div className="flex w-[27px] items-center justify-center border-r border-[#b5b9bc]">
            <Svg w={17} h={16}>
              <path d="M4 1h3v3h3V1h3v3l3 7v4h-5v-5H6.500v5H1v-4l3-7z" fill="#4a4e51" />
              <path d="M4 5l-2 7M11 5v5" stroke="#a6a9ab" strokeWidth="1.500" />
            </Svg>
          </div>
          <div className="flex flex-1 items-center justify-center"><Arrow /></div>
        </div>
        <div className="ml-[2px] h-[29px] w-px bg-[#a9adb0]" />
        <div className="ml-[2px] mt-px flex h-[28px] w-[40px] items-center justify-center border border-[#a3a7aa] bg-[#f2f3f4]">
          <Svg w={18} h={18}>
            <path d="M1 5l4-4h12v12l-4 4H1zM1 5h12v12M13 5l4-4" stroke="#3f4447" fill="#fff" />
            <path d="M4 8h3v4h4v3H4z" fill="#ffd38a" stroke="#c98a34" strokeWidth=".7" />
            <Cube x={5.500} y={6.500} s={6.500} />
          </Svg>
        </div>
        <div className="ml-[90px] mr-[18px] mt-[3px] flex h-[23px] w-[165px] border border-[#a3a7aa] text-[11.200px] leading-[21px]">
          <div className="flex-1 pl-[7px]">Geometry</div>
          <div className="flex w-[15px] items-center justify-center border-l border-[#a3a7aa]"><Arrow /></div>
        </div>
      </div>
    </div>
  );
}

/* ---------- Windows taskbar ---------- */

const TASKS = [
  <Svg w={23} h={23}>
    <defs><linearGradient id="win" x1="0" y1="0" x2="1" y2="1"><stop stopColor="#7fe0ff" /><stop offset="1" stopColor="#0a9bff" /></linearGradient></defs>
    <path d="M0 0h11v11H0zM12 0h11v11H12zM0 12h11v11H0zM12 12h11v11H12z" fill="url(#win)" />
  </Svg>,
  <Svg w={22} h={23}>
    <circle cx="12.500" cy="10" r="8" fill="#4a4443" stroke="#e8e8e8" strokeWidth="2" />
    <path d="M7 16l-5.500 5.500" stroke="#d8d8d8" strokeWidth="2.500" strokeLinecap="round" />
  </Svg>,
  <Svg w={25} h={22}>
    <path d="M7 0h18v16H7z" fill="#eee" />
    <path d="M1 6h18v16H1z" fill="#777" opacity=".92" />
    <path d="M7 6h12v10H7z" fill="#b5b5b5" />
  </Svg>,
  <Svg w={24} h={24}>
    <defs><linearGradient id="chat" x1="0" y1="0" x2="1" y2="1"><stop stopColor="#8a6cc0" /><stop offset="1" stopColor="#4e5fc9" /></linearGradient></defs>
    <path d="M12 1a11 11 0 1 1-4.800 20.900L1 23l1.200-6A11 11 0 0 1 12 1z" fill="url(#chat)" />
    <rect x="6" y="8" width="8.500" height="8.500" rx="1.500" fill="#fff" />
    <path d="M15 11l3.500-2.500v7.500L15 13.500z" fill="#fff" />
  </Svg>,
  <Svg w={24} h={23}>
    <path d="M0 2a1.500 1.500 0 0 1 1.500-1.500H9l2.500 3H24V8H0z" fill="#d99a18" />
    <path d="M0 4.500h10l2-1.500h11a1 1 0 0 1 1 1v18H0z" fill="#ffce3d" />
    <path d="M4 22v-5a2 2 0 0 1 2-2h12a2 2 0 0 1 2 2v5z" fill="#1c79c0" />
    <path d="M7 19h10v3H7z" fill="#1461a0" />
  </Svg>,
  <Svg w={25} h={25}>
    <defs>
      <linearGradient id="edge" x1="0" y1=".3" x2="1" y2=".3"><stop stopColor="#2aa3e3" /><stop offset=".5" stopColor="#2fc3c4" /><stop offset="1" stopColor="#58d86b" /></linearGradient>
    </defs>
    <circle cx="12.500" cy="12.500" r="12" fill="#1068b5" />
    <path d="M.8 11C2 4 7 .5 12.500.5 20 .5 24.500 6 24.500 11c0 4-3 6-6 6s-4.500-1-4.500-2 1-1.500 1-3.500S12.500 8 9 8s-7 1-8.200 3z" fill="url(#edge)" />
    <path d="M14 15c-.5 3 2 5.500 6 5.500 1 0 2.500-.5 3-1-2.500 3.500-6 5-10.500 5 2-1.500-1-4-1-7 0-1.500 1-2.500 2.500-2.500z" fill="#0c4a8f" />
    <path d="M10 11c-3 3-3 9 2.500 13C7 24 3.500 20 4 15.500 4.500 12 7 10 10 9.500z" fill="#1a7fd0" />
  </Svg>,
  <Svg w={24} h={24}>
    <path d="M6.500 6V2.500a1 1 0 0 1 1-1h9a1 1 0 0 1 1 1V6" stroke="#31a8dc" strokeWidth="2" />
    <path d="M.5 5.500h23V20a3 3 0 0 1-3 3h-17a3 3 0 0 1-3-3z" fill="#f3f3f3" />
    <path d="M7.500 9.500h4v4h-4z" fill="#f25022" /><path d="M12.500 9.500h4v4h-4z" fill="#7fba00" />
    <path d="M7.500 14.500h4v4h-4z" fill="#00a4ef" /><path d="M12.500 14.500h4v4h-4z" fill="#ffb900" />
  </Svg>,
  <Svg w={24} h={24}>
    <path d="M0 0h24v24H0z" fill="#fff" />
    <path d="M3.500 4.500l1.500-1.500h15v15l-1.500 1.500h-15z" fill="#c2ccd2" stroke="#33444f" />
    <path d="M4 5.500h5v10h10v3.500H4z" fill="#dfe4e7" />
    <path d="M9 3.500h11v11H9z" fill="#1f9ad8" />
    <path d="M9.500 3.500V15h10.500" stroke="#24475a" />
    <path d="M11 3.500h9v9.500h-9z" fill="#109be0" />
  </Svg>,
  <Svg w={22} h={22}>
    <path d="M4 0h18v19l-3 3H0V4z" fill="#1769e8" />
    <path d="M15 6.500h-3.500a4.500 4.500 0 0 0 0 9H15" stroke="#fff" strokeWidth="2.800" />
  </Svg>,
  <Svg w={24} h={24}>
    <path d="M12 1c7 0 11 4.500 11 9s-4 5-6 5c-3 0-3 2-3 4 0 3-2 4-4 3C4 20 1 16 1 11 2 4 7 1 12 1z" fill="#4bb9ec" />
    <circle cx="8" cy="7" r="2" fill="#4fb350" /><circle cx="13.500" cy="5" r="2" fill="#f7c948" /><circle cx="4.500" cy="12" r="2" fill="#e3593c" /><circle cx="12" cy="12.500" r="1.500" fill="#20506b" />
    <path d="M16.500 7.500h4v5h-4z" fill="#f0dcc0" /><path d="M17 12.500h3l-.5 10.500h-2z" fill="#b86b2a" />
  </Svg>,
];
const TASK_W = [45, 44, 44, 43, 45, 44, 43, 45, 44, 43];

function Taskbar() {
  return (
    <div className="flex h-[48px] bg-[linear-gradient(90deg,#1f2724_0%,#1c2326_20%,#202224_29%,#2b201b_37%,#33201a_48%,#33201a_58%,#2a211f_70%,#25221f_82%,#2e211e_89%,#1f2326_96%,#1e2426_100%)] font-['Open_Sans',sans-serif] text-white">
      <div className="flex w-[463px] items-center pl-[20px]">
        <Svg w={24} h={16}>
          <path d="M5 15a4.500 4.500 0 0 1 0-9A7 7 0 0 1 18 5a5 5 0 0 1 1 10z" fill="#d7e3f8" />
          <path d="M5 6c4-1 6 2 7 4 3-3 8-2 11 1 0-3-2-5.500-5-6A7 7 0 0 0 5 6z" fill="#b4c6ea" />
        </Svg>
        <div className="ml-[8px] mt-[2px] text-[12px] leading-4">
          <div className="tracking-[-0.4px]">83°F</div>
          <div className="tracking-[-0.1px] text-[#c9cccd]">Cloudy</div>
        </div>
      </div>
      {TASKS.map((t, i) => (
        <div key={i} className="flex h-full shrink-0 items-center justify-center" style={{ width: TASK_W[i] }}>
          <div className={`flex h-10 w-10 flex-col items-center rounded pt-[8px] ${i === 7 ? "bg-white/8" : ""}`}>
            <div className="flex h-6 items-center">{t}</div>
            {(i === 4 || i > 7) && <div className="mt-[4px] h-[3px] w-[6px] rounded bg-[#9b9796]" />}
            {i === 7 && <div className="mt-[4px] h-[3px] w-4 rounded bg-[#ee7d63]" />}
          </div>
        </div>
      ))}
      <div className="flex-1" />
      <div className="flex items-center">
        <Svg w={12} h={7} className="mr-[9px]"><path d="M1 6l5-5 5 5" stroke="#fff" strokeWidth="1.300" /></Svg>
        <Svg w={17} h={11} className="mr-[9px]">
          <path d="M4 10a3 3 0 0 1 0-6 5 5 0 0 1 9 0 3 3 0 0 1 0 6z" fill="#b9babb" />
          <path d="M1 9c1-3 5-4 8-1 2-3 6-2 7 0-1 2-2 2.500-3 2.500H4C2 10.500 1 10 1 9z" fill="#f3f3f3" />
        </Svg>
        <Svg w={16} h={16} className="mr-[12px]">
          <path d="M7 0l6 2v5c0 4-3 6-6 8C4 13 1 11 1 7V2z" fill="#2b9ae8" />
          <path d="M7 0l6 2v5H7zM7 7v8C4 13 1.500 11 1 7z" fill="#1b80d0" />
          <circle cx="11" cy="11" r="4.500" fill="#16843b" /><path d="M9 11l1.500 1.500L13.300 9.500" stroke="#fff" strokeWidth="1.300" />
        </Svg>
        <Svg w={15} h={12} className="mr-[6px]">
          <path d="M1 5c4-4 9-4 13 0M3.300 7.300c3-2.500 5.500-2.500 8.400 0M5.300 9.500c1.500-1.200 3-1.200 4.400 0" stroke="#fff" strokeWidth="1.300" />
          <circle cx="7.500" cy="10.800" r="1.200" fill="#fff" />
        </Svg>
        <Svg w={17} h={13} className="mr-[9px]">
          <path d="M1 4.500h3L7.500 1v11L4 8.500H1z" stroke="#fff" strokeWidth="1.200" />
          <path d="M10 4c1.200 1.500 1.200 3.500 0 5" stroke="#fff" strokeWidth="1.200" /><path d="M12.500 2.500c2 2.500 2 5.500 0 8M14.500 1c2.500 3 2.500 8 0 11" stroke="#807a78" />
        </Svg>
        <Svg w={17} h={13} className="mr-[13px]">
          <path d="M6 2.500h8.500v9H4.500V8" stroke="#fff" strokeWidth="1.200" /><path d="M7 4.500h5.500v5H7zM15 5h1.500v4H15z" fill="#fff" />
          <path d="M1.500 0v3M4 0v3M.5 3h4.500v2L2.800 6.500.5 5zM2.700 6v3" stroke="#fff" fill="#fff" />
        </Svg>
        <div className="mt-[2px] w-[51px] whitespace-nowrap text-right text-[12px] leading-4 tracking-[-0.3px]">
          <div className="tracking-[-0.45px]">1:46 PM</div>
          <div className="tracking-[-0.15px]">7/7/2022</div>
        </div>
        <div className="ml-[8px] mr-[20px] flex h-4 w-4 items-center justify-center rounded-full bg-[#f47e66] text-[10px] leading-none text-[#331712]">1</div>
      </div>
    </div>
  );
}

export default function App() {
  return (
    <div className="flex h-[768px] w-[1366px] flex-col overflow-hidden font-['Noto_Sans',sans-serif]">
      <TitleBar />
      <TabBar />
      <Ribbon />
      <div className="flex h-[520px]">
        <SidePanel />
        <GraphicsWindow />
      </div>
      <StatusBar />
      <Taskbar />
    </div>
  );
}
